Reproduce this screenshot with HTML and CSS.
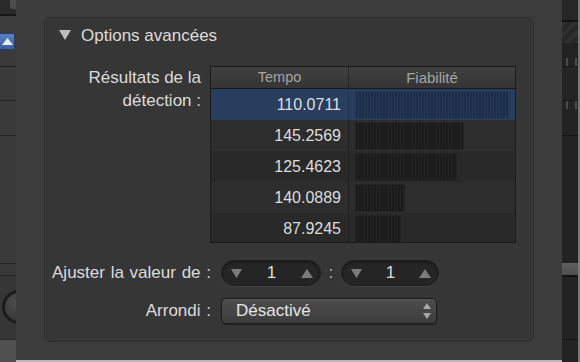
FILE: index.html
```html
<!DOCTYPE html>
<html lang="fr">
<head>
<meta charset="utf-8">
<title>Options avancées</title>
<link rel="stylesheet" href="styles.css">
</head>
<body>
<div class="screen">
  <div class="left-strip">
    <div class="ls-top"><span class="ls-chip"></span></div>
    <div class="ls-dark"></div>
    <div class="ls-gap"></div>
    <div class="ls-btnrow">
      <div class="ls-btn">
        <svg width="11" height="7" viewBox="0 0 11 7"><polygon points="0,7 5.5,0 11,7" fill="#e8eefa"/></svg>
      </div>
    </div>
    <div class="ls-gap2"></div>
    <div class="ls-row ls-h34"></div>
    <div class="ls-row ls-h35"></div>
    <div class="ls-row ls-h128"></div>
    <div class="ls-row ls-h12"></div>
    <div class="ls-knobrow"><div class="ls-knob"><span class="ls-mark"></span></div></div>
    <div class="ls-bottom"></div>
  </div>

  <div class="panel">
    <div class="group">
      <div class="header">
        <svg class="disclosure" width="12" height="10" viewBox="0 0 12 10"><polygon points="0,0 12,0 6,10" fill="#bdbdbd"/></svg>
        <span class="title">Options avancées</span>
      </div>

      <div class="results-row">
        <div class="label label-results">Résultats de la<br>détection :</div>
        <div class="table">
          <div class="th th-tempo">Tempo</div>
          <div class="th th-fiab">Fiabilité</div>

          <div class="td num sel">110.0711</div>
          <div class="td bar-cell sel"><div class="bar bar-sel" style="width:155px"></div></div>

          <div class="td num r-even">145.2569</div>
          <div class="td bar-cell r-even"><div class="bar" style="width:109px"></div></div>

          <div class="td num r-odd">125.4623</div>
          <div class="td bar-cell r-odd"><div class="bar" style="width:102px"></div></div>

          <div class="td num r-even">140.0889</div>
          <div class="td bar-cell r-even"><div class="bar" style="width:50px"></div></div>

          <div class="td num r-odd">87.9245</div>
          <div class="td bar-cell r-odd"><div class="bar" style="width:46px"></div></div>
        </div>
      </div>

      <div class="control-row adjust-row">
        <div class="label label-ctrl">Ajuster la valeur de :</div>
        <div class="stepper stepper-a">
          <svg class="tri" width="11" height="9" viewBox="0 0 11 9"><polygon points="0,0 11,0 5.5,9" fill="#7b7b7b"/></svg>
          <span class="step-val">1</span>
          <svg class="tri" width="12" height="9" viewBox="0 0 12 9"><polygon points="0,9 12,9 6,0" fill="#7b7b7b"/></svg>
        </div>
        <span class="colon">:</span>
        <div class="stepper stepper-b">
          <svg class="tri" width="11" height="9" viewBox="0 0 11 9"><polygon points="0,0 11,0 5.5,9" fill="#7b7b7b"/></svg>
          <span class="step-val">1</span>
          <svg class="tri" width="12" height="9" viewBox="0 0 12 9"><polygon points="0,9 12,9 6,0" fill="#7b7b7b"/></svg>
        </div>
      </div>

      <div class="control-row round-row">
        <div class="label label-ctrl">Arrondi :</div>
        <div class="popup">
          <span class="popup-text">Désactivé</span>
          <svg class="updown" width="8" height="16" viewBox="0 0 8 16"><polygon points="0,6 8,6 4,0" fill="#a8a8a8"/><polygon points="0,10 8,10 4,16" fill="#a8a8a8"/></svg>
        </div>
      </div>
    </div>
  </div>

  <div class="right-strip">
    <div class="rs rs-top"></div>
    <div class="rs rs-line2"></div>
    <div class="rs rs-hatch"></div>
    <div class="rs rs-ticks"><span class="tick"></span><span class="tick"></span></div>
    <div class="rs rs-line"></div>
    <div class="rs rs-h33"></div>
    <div class="rs rs-line"></div>
    <div class="rs rs-h34 rs-ticks-top"><span class="tick"></span><span class="tick"></span></div>
    <div class="rs rs-line"></div>
    <div class="rs rs-h127"></div>
    <div class="rs rs-gray"></div>
    <div class="rs rs-line2"></div>
    <div class="rs rs-h63"></div>
    <div class="rs rs-line"></div>
    <div class="rs rs-rest"></div>
  </div>
</div>
</body>
</html>
```

FILE: styles.css
```css
html, body {
  margin: 0;
  padding: 0;
  background: #3c3c3c;
}

body {
  font-family: "Liberation Sans", Arial, sans-serif;
  color: #dedede;
}

.screen {
  width: 580px;
  height: 362px;
  display: flex;
  overflow: hidden;
}

/* ---------- left strip ---------- */
.left-strip {
  width: 16px;
  flex: none;
  display: flex;
  flex-direction: column;
  background: #3a3a3a;
  overflow: hidden;
}
.ls-top {
  height: 14px;
  background: #2a2a2a;
  display: flex;
  justify-content: flex-end;
}
.ls-chip {
  width: 6px;
  height: 9px;
  background: #4c4c4c;
  border-radius: 0 0 0 3px;
}
.ls-dark { height: 2px; background: #161616; }
.ls-gap { height: 17px; background: #3d3d3d; }
.ls-btnrow { height: 18px; background: #3b3b3b; }
.ls-btn {
  width: 15px;
  height: 17px;
  box-sizing: border-box;
  background: linear-gradient(#5a80c4, #3d5f9e);
  border: 1px solid #22396a;
  border-left: none;
  border-radius: 0 2px 2px 0;
  display: flex;
  align-items: center;
  justify-content: center;
}
.ls-gap2 { height: 15px; background: #3a3a3a; border-bottom: 1px solid #222; }
.ls-row { background: #3a3a3a; border-bottom: 1px solid #242424; }
.ls-h34 { height: 33px; }
.ls-h35 { height: 34px; }
.ls-h128 { height: 127px; }
.ls-h12 { height: 11px; background: #383838; }
.ls-knobrow {
  height: 64px;
  background: #363636;
  border-bottom: 1px solid #2a2a2a;
  padding-top: 14px;
  box-sizing: border-box;
}
.ls-knob {
  width: 34px;
  height: 34px;
  margin-left: 2px;
  box-sizing: border-box;
  border-radius: 50%;
  border: 3px solid #1c1c1c;
  background: radial-gradient(circle at 40% 35%, #4e4e4e, #2e2e2e);
  display: flex;
  justify-content: center;
}
.ls-mark {
  width: 3px;
  height: 4px;
  margin-left: 14px;
  margin-top: 1px;
  background: #111;
}
.ls-bottom { flex: 1; background: #505050; }

/* ---------- main panel ---------- */
.panel {
  width: 546px;
  flex: none;
  box-sizing: border-box;
  height: 362px;
  padding: 17px 28px 0 28px;
  background: #3c3c3c;
  border-bottom: 2px solid #b8b8b8;
}

.group {
  height: 325px;
  box-sizing: border-box;
  background: #363636;
  border: 1px solid #2f2f2f;
  border-radius: 6px;
  padding-top: 7px;
}

.header {
  display: flex;
  align-items: center;
  height: 22px;
  padding-left: 14px;
}
.disclosure {
  margin-right: 10px;
  margin-top: -2px;
}
.title {
  font-size: 17px;
  color: #dcdcdc;
}

.label {
  font-size: 17px;
  color: #dcdcdc;
  text-align: right;
  flex: none;
}

.results-row {
  display: flex;
  margin-top: 19px;
}
.label-results {
  width: 156px;
  line-height: 23px;
  margin-right: 9px;
}

/* table */
.table {
  width: 306px;
  height: 177px;
  box-sizing: border-box;
  border: 1px solid #1a1a1a;
  display: grid;
  grid-template-columns: 138px 1fr;
  grid-template-rows: 22px repeat(5, 31px);
  overflow: hidden;
  background: #2a2a2a;
}
.th {
  background: linear-gradient(#3f3f3f, #353535);
  border-bottom: 1px solid #181818;
  color: #a6a6a6;
  font-size: 14.5px;
  line-height: 21px;
  text-align: center;
}
.th-tempo { border-right: 1px solid #262626; }
.th-fiab { font-size: 15px; }

.td {
  height: 31px;
  box-sizing: border-box;
}
.num {
  font-size: 16px;
  line-height: 31px;
  color: #dedede;
  text-align: right;
  padding-right: 7px;
  border-right: 1px solid #222;
}
.bar-cell {
  padding: 2px 0 1px 6px;
}
.bar {
  height: 28px;
  box-sizing: border-box;
  border: 1px solid #242424;
  background: repeating-linear-gradient(90deg, #1b1b1b 0 2px, #232323 2px 3px);
}
.bar-sel {
  border-color: #243757;
  background: repeating-linear-gradient(90deg, #1d2e4b 0 2px, #243858 2px 3px);
}
.sel { background: #293e5f; }
.num.sel { border-right-color: #223450; }
.r-even { background: #2d2d2d; }
.r-odd { background: #292929; }

/* controls */
.control-row {
  display: flex;
  align-items: center;
  height: 26px;
}
.adjust-row { margin-top: 17px; }
.round-row { margin-top: 12px; }
.label-ctrl {
  width: 166px;
  margin-right: 10px;
  word-spacing: 1px;
}

.stepper {
  height: 26px;
  box-sizing: border-box;
  border-radius: 13px;
  background: #252525;
  border: 1px solid #1e1e1e;
  box-shadow: inset 0 1px 2px rgba(0, 0, 0, 0.5), 0 1px 0 rgba(255, 255, 255, 0.05);
  display: flex;
  align-items: center;
  justify-content: space-between;
  padding: 0 7px 0 9px;
}
.stepper-a { width: 100px; }
.stepper-b { width: 98px; }
.step-val {
  font-size: 17px;
  color: #dcdcdc;
}
.tri { display: block; }
.colon {
  width: 20px;
  text-align: center;
  font-size: 16px;
  color: #bdbdbd;
}

.popup {
  width: 216px;
  height: 26px;
  box-sizing: border-box;
  border-radius: 5px;
  border: 1px solid #1c1c1c;
  background: linear-gradient(#595959 0, #4b4b4b 2px, #444 55%, #3d3d3d 100%);
  box-shadow: 0 1px 1px rgba(0, 0, 0, 0.4);
  display: flex;
  align-items: center;
  justify-content: space-between;
  padding: 0 5px 0 14px;
}
.popup-text {
  font-size: 17px;
  color: #e6e6e6;
}
.updown { display: block; }

/* ---------- right strip ---------- */
.right-strip {
  width: 18px;
  flex: none;
  box-sizing: border-box;
  border-right: 2px solid #7a7a7a;
  display: flex;
  flex-direction: column;
  background: #232323;
}
.rs { flex: none; }
.rs-top { height: 20px; background: #262626; }
.rs-line2 { height: 2px; background: #121212; }
.rs-line { height: 1px; background: #161616; }
.rs-hatch {
  height: 21px;
  background: repeating-linear-gradient(135deg, #303030 0 4px, #272727 4px 8px);
}
.rs-ticks {
  height: 23px;
  background: #222;
  display: flex;
  align-items: flex-end;
  gap: 7px;
  padding-left: 4px;
}
.tick {
  width: 2px;
  height: 8px;
  background: #4a4a4a;
}
.rs-h33 { height: 33px; background: #242424; }
.rs-h34 { height: 34px; background: #232323; }
.rs-ticks-top {
  display: flex;
  align-items: flex-start;
  gap: 7px;
  padding-left: 4px;
}
.rs-h127 { height: 127px; background: #232323; }
.rs-gray { height: 12px; background: linear-gradient(#606060, #4e4e4e); }
.rs-h63 { height: 62px; background: #232323; }
.rs-rest { flex: 1; background: #232323; }
```
